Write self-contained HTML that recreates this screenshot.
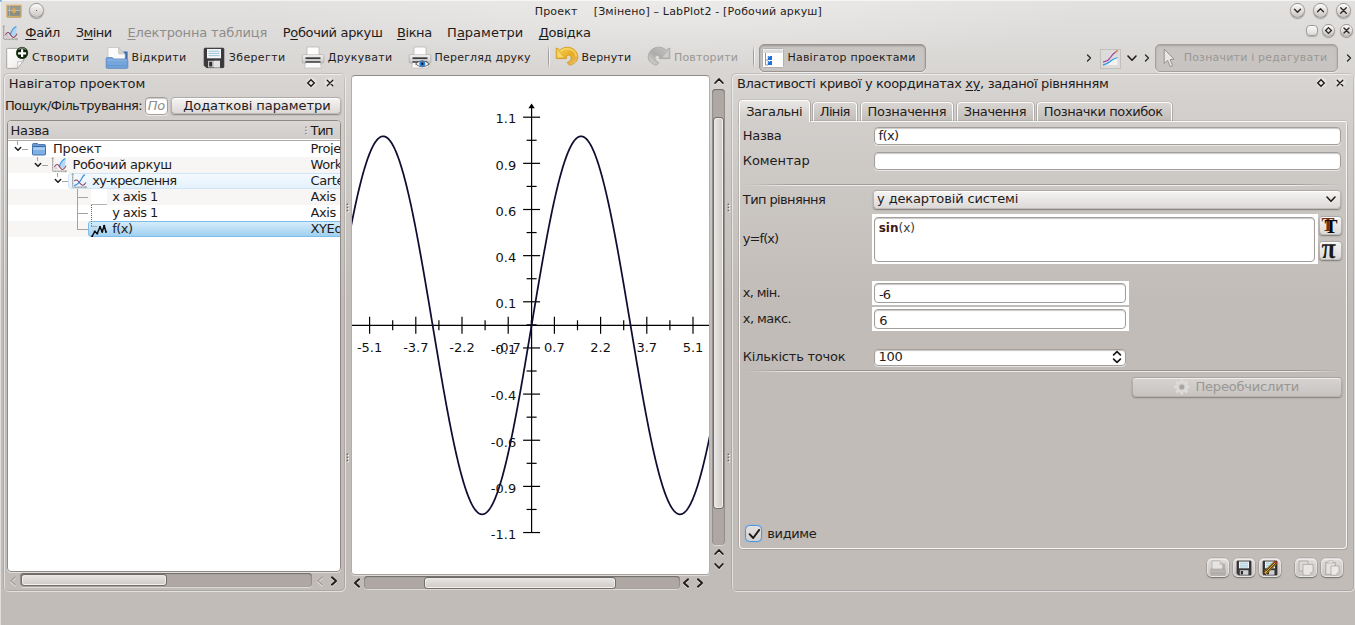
<!DOCTYPE html>
<html lang="uk"><head><meta charset="utf-8"><title>LabPlot2</title>
<style>
html,body{margin:0;padding:0}
body{width:1355px;height:625px;overflow:hidden;position:relative;font-family:"DejaVu Sans","Liberation Sans",sans-serif;background:#c1bcb8}
.t{position:absolute;white-space:pre;line-height:1;}
u{text-decoration:underline;text-underline-offset:1.5px;text-decoration-thickness:1px}

.bg{position:absolute;left:0;top:0;width:1355px;height:625px;background:
 radial-gradient(ellipse 420px 70px at 677px 0px, rgba(255,255,255,0.35), rgba(255,255,255,0) 100%),
 linear-gradient(#e2e1df 0px,#dddbd9 40px,#d2cfcc 110px,#c1bcb8 300px,#c1bcb8 100%);}
.dockd{position:absolute;border:1px solid rgba(0,0,0,0.10);border-radius:5px;box-sizing:border-box}
.dockl{position:absolute;border:1px solid rgba(255,255,255,0.55);border-radius:5px;box-sizing:border-box}
.btn{position:absolute;box-sizing:border-box;border-radius:4px;border:1px solid rgba(70,60,55,0.30);background:linear-gradient(#f6f5f4,#dcd9d7);box-shadow:0 1px 1.5px rgba(0,0,0,0.38), inset 0 1px 0 rgba(255,255,255,0.9)}
.edit{position:absolute;box-sizing:border-box;border-radius:4px;border:1px solid #a39e9a;background:#fff;box-shadow:inset 0 1px 1px rgba(0,0,0,0.22),0 1px 0 rgba(255,255,255,0.55)}
.cbtn{position:absolute;width:15px;height:15px;border-radius:50%;box-sizing:border-box;border:1px solid rgba(90,82,76,0.45);background:linear-gradient(#fafaf9,#c9c5c2);box-shadow:0 1px 1px rgba(0,0,0,0.3),inset 0 1px 0 #fff}
.sbg{position:absolute;box-sizing:border-box;border-radius:4px;background:#aea7a3;box-shadow:inset 0 1px 1px rgba(0,0,0,0.35),inset 1px 0 1px rgba(0,0,0,0.12),inset -1px 0 1px rgba(0,0,0,0.12),0 1px 0 rgba(255,255,255,0.45)}
.sbh{position:absolute;box-sizing:border-box;border-radius:3px;border:1px solid rgba(255,255,255,0.55);background:linear-gradient(#e6e4e2,#d0ccc9);box-shadow:0 0 0 1px rgba(70,62,56,0.55)}
.sbv{position:absolute;box-sizing:border-box;border-radius:3px;border:1px solid rgba(255,255,255,0.55);background:linear-gradient(90deg,#e6e4e2,#d0ccc9);box-shadow:0 0 0 1px rgba(70,62,56,0.55)}

</style></head><body>
<div class="bg"></div><svg style="position:absolute;left:6px;top:4px;" width="16" height="14" viewBox="0 0 16 14"><rect x="0.9" y="1.3" width="14.2" height="11.2" fill="#878d87" stroke="#d8b470" stroke-width="1.35"/><rect x="2" y="2.4" width="12" height="4" fill="#9da19b" opacity="0.7"/><path d="M2 6.6 H14" stroke="#e6e2da" stroke-width="0.7" opacity="0.8"/><path d="M3.6 2 V13.5" stroke="#e6e2da" stroke-width="0.6" opacity="0.7"/><path d="M8 3.2 L10.4 6.2 H5.6Z M8 10 L10.4 7 H5.6Z" fill="#e2a646"/><path d="M1 13.2 H15" stroke="#b08a4a" stroke-width="0.8"/></svg><div style="position:absolute;left:0px;top:0px;width:1px;height:625px;background:rgba(255,255,255,0.5)"></div><div style="position:absolute;left:0px;top:0px;width:1355px;height:1px;background:rgba(255,255,255,0.6)"></div><div style="position:absolute;left:0px;top:0px;width:2px;height:2px;background:#5aa0dc;border-radius:0 0 2px 0;opacity:0.8"></div><div class="cbtn" style="left:29px;top:3px"></div><div style="position:absolute;left:35.6px;top:9.6px;width:1.6px;height:1.6px;background:#333;border-radius:50%"></div><div class="t" id="t1" style="left:534.70px;top:6.00px;font-size:11px;color:#1f1c1b;letter-spacing:0.198px;">Проект</div><div class="t" id="t2" style="left:593.70px;top:6.00px;font-size:11px;color:#1f1c1b;letter-spacing:0.151px;">[Змінено] – LabPlot2 - [Робочий аркуш]</div><div class="cbtn" style="left:1290.1px;top:2.5px"></div><svg style="position:absolute;left:1290.1px;top:2.5px;" width="15" height="15" viewBox="0 0 15 15"><path d="M-3 -1.2 L0 1.8 L3 -1.2" transform="translate(7.5,7.5)" fill="none" stroke="#2a2725" stroke-width="1.35" stroke-linecap="round" stroke-linejoin="round"/></svg><div class="cbtn" style="left:1313.0px;top:2.5px"></div><svg style="position:absolute;left:1313.0px;top:2.5px;" width="15" height="15" viewBox="0 0 15 15"><path d="M-3 1.2 L0 -1.8 L3 1.2" transform="translate(7.5,7.5)" fill="none" stroke="#2a2725" stroke-width="1.35" stroke-linecap="round" stroke-linejoin="round"/></svg><div class="cbtn" style="left:1335.7px;top:2.5px"></div><svg style="position:absolute;left:1335.7px;top:2.5px;" width="15" height="15" viewBox="0 0 15 15"><path d="M-2.8 -2.8 L2.8 2.8 M2.8 -2.8 L-2.8 2.8" transform="translate(7.5,7.5)" fill="none" stroke="#2a2725" stroke-width="1.35" stroke-linecap="round" stroke-linejoin="round"/></svg><div class="t" id="t3" style="left:25.30px;top:26.00px;font-size:13px;color:#1f1c1b;letter-spacing:-0.279px;"><u>Ф</u>айл</div><div class="t" id="t4" style="left:75.70px;top:26.00px;font-size:13px;color:#1f1c1b;letter-spacing:-0.531px;">З<u>м</u>іни</div><div class="t" id="t5" style="left:127.50px;top:26.00px;font-size:13px;color:#8f8c8a;letter-spacing:-0.150px;"><u>Е</u>лектронна таблиця</div><div class="t" id="t6" style="left:282.80px;top:26.00px;font-size:13px;color:#1f1c1b;letter-spacing:-0.346px;">Р<u>о</u>бочий аркуш</div><div class="t" id="t7" style="left:396.90px;top:26.00px;font-size:13px;color:#1f1c1b;letter-spacing:-0.390px;"><u>В</u>ікна</div><div class="t" id="t8" style="left:447.10px;top:26.00px;font-size:13px;color:#1f1c1b;letter-spacing:0.005px;">П<u>а</u>раметри</div><div class="t" id="t9" style="left:538.70px;top:26.00px;font-size:13px;color:#1f1c1b;letter-spacing:-0.300px;"><u>Д</u>овідка</div><svg style="position:absolute;left:2px;top:25px;" width="16" height="16" viewBox="0 0 16 16"><path d="M1.7 0.7 V14.2 H15.4" fill="none" stroke="#a09d9a" stroke-width="0.9"/><path d="M0.6 2.2 L1.7 0.4 L2.8 2.2 M14 13.1 L15.8 14.2 L14 15.3" fill="none" stroke="#a09d9a" stroke-width="0.7"/><path d="M1 4.5 H2.4 M1 7.5 H2.4 M1 10.5 H2.4 M4.5 13.5 V15 M7.5 13.5 V15 M10.5 13.5 V15 M13 13.5 V15" stroke="#a09d9a" stroke-width="0.7"/><path d="M8.6 9 C9.5 5 12 2.3 14.4 1.5 C14.8 5 14.3 8 13.1 10.4 C11.5 11.4 9.8 11 8.6 9Z" fill="#a9d3f4" fill-opacity="0.85"/><path d="M8.2 10.2 C9.3 5.5 11.8 2.5 14.4 1.5" fill="none" stroke="#3d9ae6" stroke-width="1.1"/><path d="M3.2 12.3 C3.5 11 4.3 9.8 5.4 9.3 C6.2 11.5 7 12.5 8 12.6Z" fill="#c9b6c4" fill-opacity="0.7"/><path d="M3.3 10 Q6 5.6 8.2 9.2 T 11.6 12.4 Q13.3 12.3 15 8.6" fill="none" stroke="#8a3f62" stroke-width="1.05"/></svg><div style="position:absolute;left:1305.5px;top:25.2px;width:12.4px;height:10.4px;border-radius:4px;border:1px solid #a09b97;background:linear-gradient(#fbfbfa,#dcd9d6);box-shadow:0 1px 1px rgba(0,0,0,0.2);box-sizing:border-box"></div><div class="cbtn" style="left:1321.5px;top:24px;width:13px;height:13px"></div><svg style="position:absolute;left:1321.5px;top:24px;" width="13" height="13" viewBox="0 0 13 13"><path d="M6.5 3.6 L9.4 6.5 L6.5 9.4 L3.6 6.5Z" fill="none" stroke="#2a2725" stroke-width="1.3"/></svg><div class="cbtn" style="left:1339.5px;top:24px;width:13px;height:13px"></div><svg style="position:absolute;left:1339.5px;top:24px;" width="13" height="13" viewBox="0 0 13 13"><path d="M4 4 L9 9 M9 4 L4 9" fill="none" stroke="#2a2725" stroke-width="1.4" stroke-linecap="round"/></svg><div class="t" id="t10" style="left:32.00px;top:52.00px;font-size:11px;color:#1f1c1b;letter-spacing:0.314px;">Створити</div><div class="t" id="t11" style="left:131.60px;top:52.00px;font-size:11px;color:#1f1c1b;letter-spacing:0.279px;">Відкрити</div><div class="t" id="t12" style="left:228.80px;top:52.00px;font-size:11px;color:#1f1c1b;letter-spacing:0.372px;">Зберегти</div><div class="t" id="t13" style="left:327.80px;top:52.00px;font-size:11px;color:#1f1c1b;letter-spacing:0.297px;">Друкувати</div><div class="t" id="t14" style="left:434.60px;top:52.00px;font-size:11px;color:#1f1c1b;letter-spacing:0.186px;">Перегляд друку</div><div class="t" id="t15" style="left:581.60px;top:52.00px;font-size:11px;color:#1f1c1b;letter-spacing:0.156px;">Вернути</div><div class="t" id="t16" style="left:673.90px;top:52.00px;font-size:11px;color:#9a9794;letter-spacing:0.222px;">Повторити</div><div style="position:absolute;left:548.2px;top:45px;width:1px;height:24px;background:linear-gradient(rgba(0,0,0,0),rgba(0,0,0,0.28) 30%,rgba(0,0,0,0.28) 70%,rgba(0,0,0,0))"></div><div style="position:absolute;left:549.2px;top:45px;width:1px;height:24px;background:linear-gradient(rgba(255,255,255,0),rgba(255,255,255,0.7) 30%,rgba(255,255,255,0.7) 70%,rgba(255,255,255,0))"></div><div style="position:absolute;left:753.4px;top:45px;width:1px;height:24px;background:linear-gradient(rgba(0,0,0,0),rgba(0,0,0,0.28) 30%,rgba(0,0,0,0.28) 70%,rgba(0,0,0,0))"></div><div style="position:absolute;left:754.4px;top:45px;width:1px;height:24px;background:linear-gradient(rgba(255,255,255,0),rgba(255,255,255,0.7) 30%,rgba(255,255,255,0.7) 70%,rgba(255,255,255,0))"></div><div style="position:absolute;left:759px;top:44px;width:167px;height:27.5px;box-sizing:border-box;border-radius:5px;border:1px solid #9a9591;background:#c9c5c2;box-shadow:inset 0 1px 2px rgba(0,0,0,0.25),0 1px 0 rgba(255,255,255,0.6)"></div><div class="t" id="t17" style="left:787.40px;top:52.00px;font-size:11px;color:#1f1c1b;letter-spacing:0.239px;">Навігатор проектами</div><svg style="position:absolute;left:1083.9px;top:51.9px;" width="10" height="12" viewBox="0 0 10 12"><path d="M3.5 3 L6.5 6 L3.5 9" fill="none" stroke="#2a2725" stroke-width="1.3" stroke-linecap="round" stroke-linejoin="round"/></svg><svg style="position:absolute;left:1141.9px;top:51.9px;" width="10" height="12" viewBox="0 0 10 12"><path d="M3.5 3 L6.5 6 L3.5 9" fill="none" stroke="#2a2725" stroke-width="1.3" stroke-linecap="round" stroke-linejoin="round"/></svg><svg style="position:absolute;left:1344px;top:51.9px;" width="10" height="12" viewBox="0 0 10 12"><path d="M3.5 3 L6.5 6 L3.5 9" fill="none" stroke="#2a2725" stroke-width="1.3" stroke-linecap="round" stroke-linejoin="round"/></svg><svg style="position:absolute;left:1125px;top:52px;" width="14" height="12" viewBox="0 0 14 12"><path d="M3 4 L7 8.2 L11 4" fill="none" stroke="#1f1c1b" stroke-width="1.6" stroke-linecap="round" stroke-linejoin="round"/></svg><div style="position:absolute;left:1155px;top:43.5px;width:183px;height:28px;box-sizing:border-box;border-radius:5px;border:1px solid #a5a09c;background:#c8c4c1;box-shadow:inset 0 1px 2px rgba(0,0,0,0.18),0 1px 0 rgba(255,255,255,0.6)"></div><div class="t" id="t18" style="left:1183.70px;top:52.00px;font-size:11px;color:#9a9794;letter-spacing:0.200px;">Позначити і редагувати</div><svg style="position:absolute;left:5px;top:46px;" width="26" height="24" viewBox="0 0 26 24"><defs><linearGradient id="pg" x1="0" y1="0" x2="1" y2="1"><stop offset="0" stop-color="#ffffff"/><stop offset="0.6" stop-color="#f4f3f2"/><stop offset="1" stop-color="#dddad8"/></linearGradient></defs><path d="M1.7 3 Q1.7 2.4 2.3 2.4 H18.9 V14 L12.4 22.4 H2.3 Q1.7 22.4 1.7 21.8Z" fill="url(#pg)" stroke="#9f9b98" stroke-width="0.9"/><path d="M18.9 14 C16.5 15.8 14.5 16 12.6 15.6 C13 18 12.9 20 12.4 22.4Z" fill="#fbfbfb" stroke="#aaa6a3" stroke-width="0.6"/><circle cx="17.1" cy="6.9" r="6" fill="#0e2009"/><circle cx="17.1" cy="6.9" r="5.6" fill="none" stroke="#2b4a20" stroke-width="0.7"/><path d="M13.6 3.6 A4.8 4.8 0 0 1 20.6 3.6" fill="none" stroke="#9fb3a0" stroke-width="1.1" opacity="0.7"/><path d="M17.1 3.2 V11 M13.1 7.3 H21.1" stroke="#fff" stroke-width="2.2"/></svg><svg style="position:absolute;left:105px;top:46px;" width="24" height="24" viewBox="0 0 24 24"><path d="M17.5 5.5 H22.6 V13 H17.5Z" fill="#3b6fb5"/><path d="M3 1.5 H13.5 L20 8 V14 H3Z" fill="#fbfbfb" stroke="#c2bfbc" stroke-width="0.7"/><path d="M13.5 1.5 L20 8 H14.5 Q13.5 8 13.5 7Z" fill="#d6d3d0" stroke="#b5b1ae" stroke-width="0.5"/><path d="M1.2 12.6 Q1.2 11.6 2.2 11.6 H7 L9 13 H21.8 Q22.8 13 22.8 14 V21.4 Q22.8 22.3 21.8 22.3 H2.2 Q1.2 22.3 1.2 21.4Z" fill="#76a5dc" stroke="#4c7fc0" stroke-width="0.8"/><path d="M2 19.6 H22" stroke="#5b8fcf" stroke-width="0.8"/><path d="M2 14 H22" stroke="#a4c6ec" stroke-width="0.8" opacity="0.8"/></svg><svg style="position:absolute;left:203px;top:47px;" width="22" height="22" viewBox="0 0 22 22"><path d="M1.2 2 Q1.2 1.2 2 1.2 H20 Q20.8 1.2 20.8 2 V19.8 Q20.8 20.6 20 20.6 H3.4 L1.2 18.4Z" fill="#3b3b3e" stroke="#252527" stroke-width="0.8"/><rect x="4" y="2" width="14" height="9.3" fill="#f4f6f8"/><path d="M5.5 4.2 H16.5 M5.5 6.4 H16.5 M5.5 8.6 H16.5" stroke="#8fc0d6" stroke-width="0.9"/><rect x="5" y="13.8" width="12" height="6.6" fill="#c9c9c9"/><rect x="6.2" y="14.8" width="3" height="4.6" fill="#2e2e30"/><path d="M11 13.8 H17 V20.4 H11Z" fill="#e2e2e2"/></svg><svg style="position:absolute;left:301px;top:46px;" width="24" height="24" viewBox="0 0 24 24"><defs><linearGradient id="prb" x1="0" y1="0" x2="0" y2="1"><stop offset="0" stop-color="#f4f4f4"/><stop offset="1" stop-color="#c6c6c6"/></linearGradient></defs><path d="M6 1 H18 V10 H6Z" fill="#fdfdfd" stroke="#b9b6b3" stroke-width="0.8"/><path d="M1.2 9.8 Q1.2 8.6 2.4 8.6 H21.6 Q22.8 8.6 22.8 9.8 V16 Q22.8 17 21.8 17 H2.2 Q1.2 17 1.2 16Z" fill="url(#prb)" stroke="#a9a6a3" stroke-width="0.7"/><path d="M6 8.6 H18 V10 H6Z" fill="#e9e9e9"/><path d="M4.5 12.2 H19.5" stroke="#3c3c3c" stroke-width="1.8"/><path d="M4.8 15.6 H19.2 L20.4 22 H3.6Z" fill="#fafafa" stroke="#b9b6b3" stroke-width="0.7"/><path d="M4.5 16 H19.5" stroke="#2e2e2e" stroke-width="1.4"/></svg><svg style="position:absolute;left:408px;top:46px;" width="24" height="24" viewBox="0 0 24 24"><defs><linearGradient id="prb" x1="0" y1="0" x2="0" y2="1"><stop offset="0" stop-color="#f4f4f4"/><stop offset="1" stop-color="#c6c6c6"/></linearGradient></defs><path d="M6 1 H18 V10 H6Z" fill="#fdfdfd" stroke="#b9b6b3" stroke-width="0.8"/><path d="M1.2 9.8 Q1.2 8.6 2.4 8.6 H21.6 Q22.8 8.6 22.8 9.8 V16 Q22.8 17 21.8 17 H2.2 Q1.2 17 1.2 16Z" fill="url(#prb)" stroke="#a9a6a3" stroke-width="0.7"/><path d="M6 8.6 H18 V10 H6Z" fill="#e9e9e9"/><path d="M4.5 12.2 H19.5" stroke="#3c3c3c" stroke-width="1.8"/><path d="M4.8 15.6 H19.2 L20.4 22 H3.6Z" fill="#fafafa" stroke="#b9b6b3" stroke-width="0.7"/><path d="M4.5 16 H19.5" stroke="#2e2e2e" stroke-width="1.4"/><path d="M7.5 18 Q14 11.5 21.5 18 Q14 23.5 7.5 18Z" fill="#f2f2f2" stroke="#555" stroke-width="0.9"/><circle cx="14.3" cy="17.8" r="3" fill="#2f7fd6"/><circle cx="14.3" cy="17.8" r="1.2" fill="#10213a"/></svg><svg style="position:absolute;left:555px;top:46px;" width="24" height="22" viewBox="0 0 24 22"><defs><linearGradient id="ug" x1="0" y1="0" x2="0.9" y2="1"><stop offset="0" stop-color="#f6d257"/><stop offset="0.55" stop-color="#e5ae27"/><stop offset="0.8" stop-color="#e3b040"/><stop offset="1" stop-color="#f2e4c4"/></linearGradient></defs><path d="M1.2 2 L1.2 12.6 L11.4 12.6 L11.4 10.6 C13 8.6 15.6 9 16.1 11.4 C16.4 13.6 15 15.4 12.2 16.6 L14.5 19.2 C19.5 18.2 22.6 15 22.8 11.5 C23 6 18.2 1.2 12.4 1.2 C9 1.2 6.6 2.4 4.8 4.2 L3.2 2.8 Z" fill="url(#ug)" stroke="#d49a1c" stroke-width="0.9" stroke-linejoin="round"/><path d="M2.6 5 L2.6 11.3 L8.8 11.3 C6.5 9.5 4.5 7.2 2.6 5Z" fill="#f9dc74" opacity="0.9"/><path d="M6 4.6 C9 2.6 13 2.2 16.5 3.8 C19 5 20.8 7.5 21.2 10" fill="none" stroke="#f9dc74" stroke-width="1.6" opacity="0.75" stroke-linecap="round"/></svg><svg style="position:absolute;left:647px;top:46px;" width="24" height="22" viewBox="0 0 24 22"><defs><linearGradient id="rg" x1="0" y1="0" x2="0.9" y2="1"><stop offset="0" stop-color="#c9c7c5"/><stop offset="0.55" stop-color="#aeacaa"/><stop offset="1" stop-color="#d6d4d2"/></linearGradient></defs><g transform="translate(24,0) scale(-1,1)"><path d="M1.2 2 L1.2 12.6 L11.4 12.6 L11.4 10.6 C13 8.6 15.6 9 16.1 11.4 C16.4 13.6 15 15.4 12.2 16.6 L14.5 19.2 C19.5 18.2 22.6 15 22.8 11.5 C23 6 18.2 1.2 12.4 1.2 C9 1.2 6.6 2.4 4.8 4.2 L3.2 2.8 Z" fill="url(#rg)" stroke="#a5a3a1" stroke-width="0.8" stroke-linejoin="round"/><path d="M2.6 5 L2.6 11.3 L8.8 11.3 C6.5 9.5 4.5 7.2 2.6 5Z" fill="#d4d2d0" opacity="0.9"/></g></svg><svg style="position:absolute;left:762px;top:48px;" width="22" height="20" viewBox="0 0 22 20"><rect x="0.5" y="0.5" width="21" height="19" rx="1" fill="#fff" stroke="#b5b1ae"/><rect x="1.5" y="1.5" width="19" height="3.5" fill="#dcdcdc"/><path d="M3.5 5 V17 H6 M3.5 12 H6" fill="none" stroke="#8a8a8a" stroke-width="0.9"/><rect x="5.8" y="8" width="4.2" height="4" fill="#1f6fd8"/><rect x="5.8" y="13" width="4.2" height="4" fill="#1f6fd8"/><path d="M6.5 9 L8 8.3 M6.5 14 L8 13.3" stroke="#bfe0ff" stroke-width="0.8"/></svg><svg style="position:absolute;left:1100px;top:48.5px;" width="21" height="20" viewBox="0 0 21 20"><rect x="0.5" y="0.5" width="20" height="19" fill="#dedcda" stroke="#9c9996" stroke-width="0.8" stroke-dasharray="1 1"/><path d="M3 16 C6 15 8 14.5 10 12 S14 8.5 17.5 7.5 V16Z" fill="#f4f4f4" opacity="0.9"/><path d="M3 13 C6 12.5 8 12.5 10 9 S14 4 17.5 1.5" fill="none" stroke="#9a3f96" stroke-width="1.1"/><path d="M15 3.6 L17.5 1.5" stroke="#e08a2a" stroke-width="1.1"/><path d="M3 16 C6 15.5 8 14.5 10 12.5 S14 9.5 17.5 8.5" fill="none" stroke="#2f9ae8" stroke-width="1.3"/></svg><svg style="position:absolute;left:1162px;top:47px;" width="14" height="22" viewBox="0 0 14 22"><path d="M2.2 2 L2.2 16.5 L5.6 13.4 L8.2 19.6 L10.6 18.6 L8 12.6 L12 12.2Z" fill="#e9e7e5" stroke="#8e8b88" stroke-width="0.9" stroke-linejoin="round"/></svg><div class="dockl" style="left:4px;top:74px;width:342px;height:517.5px"></div><div class="dockd" style="left:3px;top:73px;width:342px;height:517.5px"></div><div class="t" id="t19" style="left:8.80px;top:77.00px;font-size:13px;color:#1f1c1b;letter-spacing:-0.072px;">Навігатор проектом</div><div style="position:absolute;left:305.6px;top:77.0px;width:11px;height:11px;border-radius:50%;background:radial-gradient(rgba(255,255,255,0.55),rgba(255,255,255,0.25) 60%,rgba(255,255,255,0))"></div><div style="position:absolute;left:324.4px;top:77.0px;width:11px;height:11px;border-radius:50%;background:radial-gradient(rgba(255,255,255,0.55),rgba(255,255,255,0.25) 60%,rgba(255,255,255,0))"></div><svg style="position:absolute;left:306.1px;top:77.5px;" width="10" height="10" viewBox="0 0 10 10"><path d="M5 1.7 L8.3 5 L5 8.3 L1.7 5Z" fill="none" stroke="#1d1a19" stroke-width="1.35"/></svg><svg style="position:absolute;left:324.9px;top:77.5px;" width="10" height="10" viewBox="0 0 10 10"><path d="M2.2 2.2 L7.8 7.8 M7.8 2.2 L2.2 7.8" fill="none" stroke="#1d1a19" stroke-width="1.3" stroke-linecap="round"/></svg><div class="t" id="t20" style="left:4.90px;top:99.00px;font-size:13px;color:#1f1c1b;letter-spacing:-0.604px;">Пошук/Фільтрування:</div><div class="edit" style="left:145px;top:97px;width:23px;height:17.8px"></div><div class="t" id="t21" style="left:147.80px;top:99.00px;font-size:13px;color:#8f8c89;letter-spacing:-0.232px;font-style:italic;">По</div><div class="btn" style="left:171.3px;top:96.5px;width:169.8px;height:17.6px"></div><div class="t" id="t22" style="left:183.20px;top:99.00px;font-size:13px;color:#1f1c1b;letter-spacing:-0.068px;">Додаткові параметри</div><div style="position:absolute;left:7px;top:120px;width:334px;height:452px;box-sizing:border-box;border:1px solid #8f8a86;border-radius:4px;background:#fff;overflow:hidden;box-shadow:0 1px 0 rgba(255,255,255,0.5)"><div style="position:absolute;left:0;top:0;width:332px;height:18px;background:linear-gradient(#dad7d5,#cfccc9);border-bottom:1px solid #fff"></div><div style="position:absolute;left:0;top:19px;width:332px;height:1px;background:#b0a9a5"></div><div style="position:absolute;left:0;top:36px;width:332px;height:16px;background:#f7f6f5"></div><div style="position:absolute;left:0;top:68px;width:332px;height:16px;background:#f7f6f5"></div><div style="position:absolute;left:0;top:100px;width:332px;height:16px;background:#f7f6f5"></div><div style="position:absolute;left:60px;top:52px;width:280px;height:16px;box-sizing:border-box;border:1px solid #cfe6f8;border-radius:3px;background:linear-gradient(#f4fafe,#e4f1fb)"></div><div style="position:absolute;left:80px;top:100px;width:260px;height:16px;box-sizing:border-box;border:1px solid #7fbde6;border-radius:3px;background:linear-gradient(#d6ecfa,#9fd0f0)"></div></div><div class="t" id="t23" style="left:10.60px;top:124.00px;font-size:13px;color:#1f1c1b;letter-spacing:-0.324px;">Назва</div><div class="t" id="t24" style="left:310.50px;top:124.00px;font-size:13px;color:#1f1c1b;letter-spacing:-0.896px;">Тип</div><svg style="position:absolute;left:305.4px;top:126px;" width="3" height="10" viewBox="0 0 3 10"><rect x="1.3" y="1.5" width="1.1" height="1.1" fill="#fff" opacity="0.85"/><rect x="0.4" y="0.6" width="1.2" height="1.2" fill="#6f6b68"/><rect x="1.3" y="4.7" width="1.1" height="1.1" fill="#fff" opacity="0.85"/><rect x="0.4" y="3.8" width="1.2" height="1.2" fill="#6f6b68"/><rect x="1.3" y="7.9" width="1.1" height="1.1" fill="#fff" opacity="0.85"/><rect x="0.4" y="7.0" width="1.2" height="1.2" fill="#6f6b68"/></svg><div class="t" id="t25" style="left:53.00px;top:142.00px;font-size:13px;color:#1f1c1b;letter-spacing:-0.181px;">Проект</div><div class="t" id="t26" style="left:310.60px;top:142.00px;font-size:13px;color:#1f1c1b;letter-spacing:-0.420px;width:29.3px;overflow:hidden;">Proje</div><div class="t" id="t27" style="left:72.60px;top:158.00px;font-size:13px;color:#1f1c1b;letter-spacing:-0.387px;">Робочий аркуш</div><div class="t" id="t28" style="left:310.60px;top:158.00px;font-size:13px;color:#1f1c1b;letter-spacing:-0.420px;width:29.3px;overflow:hidden;">Work</div><div class="t" id="t29" style="left:92.20px;top:174.00px;font-size:13px;color:#1f1c1b;letter-spacing:-0.658px;">xy-креслення</div><div class="t" id="t30" style="left:310.60px;top:174.00px;font-size:13px;color:#1f1c1b;letter-spacing:-0.420px;width:29.3px;overflow:hidden;">Carte</div><div class="t" id="t31" style="left:112.20px;top:190.00px;font-size:13px;color:#1f1c1b;letter-spacing:-0.612px;">x axis 1</div><div class="t" id="t32" style="left:310.60px;top:190.00px;font-size:13px;color:#1f1c1b;letter-spacing:-0.420px;width:29.3px;overflow:hidden;">Axis</div><div class="t" id="t33" style="left:112.20px;top:206.00px;font-size:13px;color:#1f1c1b;letter-spacing:-0.612px;">y axis 1</div><div class="t" id="t34" style="left:310.60px;top:206.00px;font-size:13px;color:#1f1c1b;letter-spacing:-0.420px;width:29.3px;overflow:hidden;">Axis</div><div class="t" id="t35" style="left:112.20px;top:222.00px;font-size:13px;color:#1f1c1b;letter-spacing:-0.509px;">f(x)</div><div class="t" id="t36" style="left:310.60px;top:222.00px;font-size:13px;color:#1f1c1b;letter-spacing:-0.420px;width:29.3px;overflow:hidden;">XYEq</div><svg style="position:absolute;left:13.5px;top:146px;" width="8" height="6" viewBox="0 0 8 6"><path d="M1.3 1.4 L4 4.2 L6.7 1.4" fill="none" stroke="#1d1a19" stroke-width="1.45" stroke-linecap="round" stroke-linejoin="round"/></svg><svg style="position:absolute;left:33.5px;top:162px;" width="8" height="6" viewBox="0 0 8 6"><path d="M1.3 1.4 L4 4.2 L6.7 1.4" fill="none" stroke="#1d1a19" stroke-width="1.45" stroke-linecap="round" stroke-linejoin="round"/></svg><svg style="position:absolute;left:53.5px;top:178px;" width="8" height="6" viewBox="0 0 8 6"><path d="M1.3 1.4 L4 4.2 L6.7 1.4" fill="none" stroke="#1d1a19" stroke-width="1.45" stroke-linecap="round" stroke-linejoin="round"/></svg><div style="position:absolute;left:22px;top:149px;width:6px;height:1px;background:#a8a19c"></div><div style="position:absolute;left:42px;top:165px;width:6px;height:1px;background:#a8a19c"></div><div style="position:absolute;left:62px;top:181px;width:6px;height:1px;background:#a8a19c"></div><div style="position:absolute;left:17px;top:141px;width:1px;height:4px;background:#a8a19c"></div><div style="position:absolute;left:37px;top:157px;width:1px;height:4px;background:#a8a19c"></div><div style="position:absolute;left:57px;top:173px;width:1px;height:4px;background:#a8a19c"></div><div style="position:absolute;left:77px;top:189px;width:1px;height:40px;background:#a8a19c"></div><div style="position:absolute;left:77px;top:197px;width:11px;height:1px;background:#a8a19c"></div><div style="position:absolute;left:77px;top:213px;width:11px;height:1px;background:#a8a19c"></div><div style="position:absolute;left:77px;top:229px;width:11px;height:1px;background:#a8a19c"></div><svg style="position:absolute;left:31px;top:141px;" width="16" height="16" viewBox="0 0 16 16"><path d="M1.5 3.5 Q1.5 2.5 2.5 2.5 H6.5 L7.5 3.5 H13.5 Q14.5 3.5 14.5 4.5 V6 H1.5Z" fill="#6a9ad0" stroke="#3465a4" stroke-width="0.8"/><rect x="1.5" y="5.5" width="13" height="8.5" rx="1" fill="#7fb0e4" stroke="#3465a4" stroke-width="0.9"/><rect x="2.3" y="6.4" width="11.4" height="2.5" fill="#b6d4f2" opacity="0.8"/></svg><svg style="position:absolute;left:51px;top:157px;" width="16" height="16" viewBox="0 0 16 16"><path d="M1.7 0.7 V14.2 H15.4" fill="none" stroke="#a09d9a" stroke-width="0.9"/><path d="M0.6 2.2 L1.7 0.4 L2.8 2.2 M14 13.1 L15.8 14.2 L14 15.3" fill="none" stroke="#a09d9a" stroke-width="0.7"/><path d="M1 4.5 H2.4 M1 7.5 H2.4 M1 10.5 H2.4 M4.5 13.5 V15 M7.5 13.5 V15 M10.5 13.5 V15 M13 13.5 V15" stroke="#a09d9a" stroke-width="0.7"/><path d="M8.6 9 C9.5 5 12 2.3 14.4 1.5 C14.8 5 14.3 8 13.1 10.4 C11.5 11.4 9.8 11 8.6 9Z" fill="#a9d3f4" fill-opacity="0.85"/><path d="M8.2 10.2 C9.3 5.5 11.8 2.5 14.4 1.5" fill="none" stroke="#3d9ae6" stroke-width="1.1"/><path d="M3.2 12.3 C3.5 11 4.3 9.8 5.4 9.3 C6.2 11.5 7 12.5 8 12.6Z" fill="#c9b6c4" fill-opacity="0.7"/><path d="M3.3 10 Q6 5.6 8.2 9.2 T 11.6 12.4 Q13.3 12.3 15 8.6" fill="none" stroke="#8a3f62" stroke-width="1.05"/></svg><svg style="position:absolute;left:71px;top:173px;" width="16" height="16" viewBox="0 0 16 16"><path d="M1.7 0.7 V14.2 H15.4" fill="none" stroke="#a09d9a" stroke-width="0.9"/><path d="M0.6 2.2 L1.7 0.4 L2.8 2.2 M14 13.1 L15.8 14.2 L14 15.3" fill="none" stroke="#a09d9a" stroke-width="0.7"/><path d="M1 4.5 H2.4 M1 7.5 H2.4 M1 10.5 H2.4 M4.5 13.5 V15 M7.5 13.5 V15 M10.5 13.5 V15 M13 13.5 V15" stroke="#a09d9a" stroke-width="0.7"/><path d="M3 12.6 C6 12 9.5 8 11 5 S13 2.2 14 1.8" fill="none" stroke="#3d8fe0" stroke-width="1.2"/><path d="M3.2 8 Q5.5 5.5 8 9 T 12 12.2 Q13.5 12 14.8 9.5" fill="none" stroke="#8a3f62" stroke-width="1.05"/></svg><div style="position:absolute;left:91px;top:189px;width:16px;height:16px;background:#fff"></div><div style="position:absolute;left:91px;top:205px;width:16px;height:16px;background:#fff"></div><svg style="position:absolute;left:91px;top:189px;" width="16" height="16" viewBox="0 0 16 16"><path d="M0.5 15.5 H15.5" stroke="#666" stroke-width="1" stroke-dasharray="1 1"/></svg><svg style="position:absolute;left:91px;top:205px;" width="16" height="16" viewBox="0 0 16 16"><path d="M0.5 0 V15.5" stroke="#666" stroke-width="1" stroke-dasharray="1 1"/></svg><svg style="position:absolute;left:91px;top:221px;" width="16" height="16" viewBox="0 0 16 16"><path d="M1 15.5 L3.8 10.5 L6.2 12.5 L9 6 L11.2 10.8 L13.2 4.8 L15 11" fill="none" stroke="#0c0c0c" stroke-width="1.5" stroke-linejoin="round"/><g fill="#0c0c0c"><circle cx="3.8" cy="10.5" r="1.1"/><circle cx="6.2" cy="12.5" r="1.1"/><circle cx="9" cy="6" r="1.1"/><circle cx="11.2" cy="10.8" r="1.1"/><circle cx="13.2" cy="4.8" r="1.1"/><circle cx="15" cy="11" r="1"/><circle cx="1.2" cy="15.2" r="1"/></g><path d="M0.5 0 V6 M0.5 5.5 H6" stroke="#777" stroke-width="1" stroke-dasharray="1 1" fill="none"/></svg><svg style="position:absolute;left:6.6px;top:573.8px;" width="12" height="14" viewBox="0 0 12 14"><g transform="translate(6,7)"><path d="M2.1 -3.7 L-2.1 0 L2.1 3.7" transform="translate(0,1)" stroke="#fff" stroke-opacity="0.7" stroke-width="1.3" fill="none" stroke-linecap="round" stroke-linejoin="round"/><path d="M2.1 -3.7 L-2.1 0 L2.1 3.7" stroke="#a39e9a" stroke-width="1.3" fill="none" stroke-linecap="round" stroke-linejoin="round"/></g></svg><div class="sbg" style="left:20.3px;top:573.3px;width:292px;height:13.7px"></div><div class="sbh" style="left:22px;top:575px;width:143.5px;height:10.3px"></div><svg style="position:absolute;left:313.5px;top:573.8px;" width="12" height="14" viewBox="0 0 12 14"><g transform="translate(6,7)"><path d="M2.1 -3.7 L-2.1 0 L2.1 3.7" transform="translate(0,1)" stroke="#fff" stroke-opacity="0.7" stroke-width="1.3" fill="none" stroke-linecap="round" stroke-linejoin="round"/><path d="M2.1 -3.7 L-2.1 0 L2.1 3.7" stroke="#a39e9a" stroke-width="1.3" fill="none" stroke-linecap="round" stroke-linejoin="round"/></g></svg><svg style="position:absolute;left:327.6px;top:573.5px;" width="12" height="14" viewBox="0 0 12 14"><g transform="translate(6,7)"><path d="M-2.1 -3.7 L2.1 0 L-2.1 3.7" transform="translate(0,1)" stroke="#fff" stroke-opacity="0.5" stroke-width="1.8" fill="none" stroke-linecap="round" stroke-linejoin="round"/><path d="M-2.1 -3.7 L2.1 0 L-2.1 3.7" stroke="#1d1a19" stroke-width="1.8" fill="none" stroke-linecap="round" stroke-linejoin="round"/></g></svg><div style="position:absolute;left:351px;top:75px;width:359.29999999999995px;height:499.6px;box-sizing:border-box;background:#fff;border-radius:4px;border:1px solid #b3aeaa;border-top-color:#8f8a86;border-bottom-color:#a9a4a0;box-shadow:0 1px 0 rgba(255,255,255,0.45)"></div><svg style="position:absolute;left:352px;top:76px;overflow:hidden" width="357.29999999999995" height="497.6" viewBox="0 0 357.29999999999995 497.6"><g font-family='"DejaVu Sans","Liberation Sans",sans-serif' font-size="13" fill="#111"><path d="M0 249.30 H357.29999999999995" stroke="#000" stroke-width="1.2"/><path d="M179.60 29.60 V456.60" stroke="#000" stroke-width="1.2"/><path d="M179.60 27.60 l3.2 4.6 h-6.4Z" fill="#000"/><path d="M171.10 41.20 H188.10" stroke="#000" stroke-width="1.2"/><path d="M174.60 64.28 H184.60" stroke="#000" stroke-width="1.2"/><path d="M171.10 87.35 H188.10" stroke="#000" stroke-width="1.2"/><path d="M174.60 110.42 H184.60" stroke="#000" stroke-width="1.2"/><path d="M171.10 133.50 H188.10" stroke="#000" stroke-width="1.2"/><path d="M174.60 156.57 H184.60" stroke="#000" stroke-width="1.2"/><path d="M171.10 179.65 H188.10" stroke="#000" stroke-width="1.2"/><path d="M174.60 202.72 H184.60" stroke="#000" stroke-width="1.2"/><path d="M171.10 225.80 H188.10" stroke="#000" stroke-width="1.2"/><path d="M174.60 248.88 H184.60" stroke="#000" stroke-width="1.2"/><path d="M171.10 271.95 H188.10" stroke="#000" stroke-width="1.2"/><path d="M174.60 295.02 H184.60" stroke="#000" stroke-width="1.2"/><path d="M171.10 318.10 H188.10" stroke="#000" stroke-width="1.2"/><path d="M174.60 341.17 H184.60" stroke="#000" stroke-width="1.2"/><path d="M171.10 364.25 H188.10" stroke="#000" stroke-width="1.2"/><path d="M174.60 387.32 H184.60" stroke="#000" stroke-width="1.2"/><path d="M171.10 410.40 H188.10" stroke="#000" stroke-width="1.2"/><path d="M174.60 433.47 H184.60" stroke="#000" stroke-width="1.2"/><path d="M171.10 456.55 H188.10" stroke="#000" stroke-width="1.2"/><path d="M-28.60 240.80 V257.80" stroke="#000" stroke-width="1.2"/><path d="M-5.50 244.30 V254.30" stroke="#000" stroke-width="1.2"/><path d="M17.60 240.80 V257.80" stroke="#000" stroke-width="1.2"/><path d="M40.70 244.30 V254.30" stroke="#000" stroke-width="1.2"/><path d="M63.80 240.80 V257.80" stroke="#000" stroke-width="1.2"/><path d="M86.90 244.30 V254.30" stroke="#000" stroke-width="1.2"/><path d="M110.00 240.80 V257.80" stroke="#000" stroke-width="1.2"/><path d="M133.10 244.30 V254.30" stroke="#000" stroke-width="1.2"/><path d="M156.20 240.80 V257.80" stroke="#000" stroke-width="1.2"/><path d="M179.30 244.30 V254.30" stroke="#000" stroke-width="1.2"/><path d="M202.40 240.80 V257.80" stroke="#000" stroke-width="1.2"/><path d="M225.50 244.30 V254.30" stroke="#000" stroke-width="1.2"/><path d="M248.60 240.80 V257.80" stroke="#000" stroke-width="1.2"/><path d="M271.70 244.30 V254.30" stroke="#000" stroke-width="1.2"/><path d="M294.80 240.80 V257.80" stroke="#000" stroke-width="1.2"/><path d="M317.90 244.30 V254.30" stroke="#000" stroke-width="1.2"/><path d="M341.00 240.80 V257.80" stroke="#000" stroke-width="1.2"/><path d="M364.10 244.30 V254.30" stroke="#000" stroke-width="1.2"/><path d="M387.20 240.80 V257.80" stroke="#000" stroke-width="1.2"/><path d="M410.30 244.30 V254.30" stroke="#000" stroke-width="1.2"/><text x="164.20" y="47.50" text-anchor="end">1.1</text><text x="164.20" y="93.65" text-anchor="end">0.9</text><text x="164.20" y="139.80" text-anchor="end">0.6</text><text x="164.20" y="185.95" text-anchor="end">0.4</text><text x="164.20" y="232.10" text-anchor="end">0.1</text><text x="164.20" y="278.25" text-anchor="end">-0.1</text><text x="164.20" y="324.40" text-anchor="end">-0.4</text><text x="164.20" y="370.55" text-anchor="end">-0.6</text><text x="164.20" y="416.70" text-anchor="end">-0.9</text><text x="164.20" y="462.85" text-anchor="end">-1.1</text><text x="17.60" y="275.80" text-anchor="middle">-5.1</text><text x="63.80" y="275.80" text-anchor="middle">-3.7</text><text x="110.00" y="275.80" text-anchor="middle">-2.2</text><text x="156.20" y="275.80" text-anchor="middle">-0.7</text><text x="202.40" y="275.80" text-anchor="middle">0.7</text><text x="248.60" y="275.80" text-anchor="middle">2.2</text><text x="294.80" y="275.80" text-anchor="middle">3.7</text><text x="341.00" y="275.80" text-anchor="middle">5.1</text><path d="M-9.40 196.49 L-8.77 192.87 L-8.14 189.28 L-7.51 185.70 L-6.88 182.16 L-6.25 178.64 L-5.62 175.15 L-4.99 171.68 L-4.36 168.25 L-3.73 164.85 L-3.10 161.49 L-2.47 158.16 L-1.84 154.87 L-1.21 151.61 L-0.58 148.40 L0.05 145.22 L0.68 142.09 L1.31 138.99 L1.94 135.95 L2.57 132.95 L3.20 129.99 L3.83 127.08 L4.46 124.22 L5.09 121.42 L5.72 118.66 L6.35 115.95 L6.98 113.30 L7.61 110.70 L8.24 108.16 L8.87 105.68 L9.50 103.25 L10.13 100.88 L10.76 98.57 L11.39 96.32 L12.02 94.13 L12.65 92.00 L13.28 89.94 L13.91 87.94 L14.54 86.00 L15.17 84.13 L15.80 82.33 L16.43 80.59 L17.06 78.92 L17.69 77.32 L18.32 75.78 L18.95 74.32 L19.58 72.93 L20.21 71.60 L20.84 70.35 L21.47 69.17 L22.10 68.06 L22.73 67.03 L23.36 66.06 L23.99 65.17 L24.62 64.36 L25.25 63.62 L25.88 62.95 L26.51 62.36 L27.14 61.84 L27.77 61.39 L28.40 61.02 L29.03 60.73 L29.66 60.51 L30.29 60.37 L30.92 60.31 L31.55 60.31 L32.18 60.40 L32.81 60.56 L33.44 60.79 L34.07 61.11 L34.70 61.49 L35.33 61.95 L35.96 62.49 L36.59 63.10 L37.22 63.79 L37.85 64.55 L38.48 65.38 L39.11 66.29 L39.74 67.27 L40.37 68.32 L41.00 69.45 L41.63 70.64 L42.26 71.91 L42.89 73.25 L43.52 74.66 L44.15 76.14 L44.78 77.69 L45.41 79.31 L46.04 81.00 L46.67 82.75 L47.30 84.57 L47.93 86.46 L48.56 88.41 L49.19 90.42 L49.82 92.50 L50.45 94.65 L51.08 96.85 L51.71 99.11 L52.34 101.44 L52.97 103.82 L53.60 106.26 L54.23 108.76 L54.86 111.32 L55.49 113.93 L56.12 116.59 L56.75 119.31 L57.38 122.08 L58.01 124.90 L58.64 127.77 L59.27 130.69 L59.90 133.66 L60.53 136.67 L61.16 139.73 L61.79 142.83 L62.42 145.98 L63.05 149.16 L63.68 152.39 L64.31 155.65 L64.94 158.95 L65.57 162.29 L66.20 165.66 L66.83 169.07 L67.46 172.51 L68.09 175.98 L68.72 179.48 L69.35 183.00 L69.98 186.55 L70.61 190.13 L71.24 193.73 L71.87 197.36 L72.50 201.00 L73.13 204.67 L73.76 208.35 L74.39 212.05 L75.02 215.76 L75.65 219.49 L76.28 223.22 L76.91 226.97 L77.54 230.73 L78.17 234.50 L78.80 238.27 L79.43 242.04 L80.06 245.82 L80.69 249.60 L81.32 253.38 L81.95 257.16 L82.58 260.93 L83.21 264.70 L83.84 268.47 L84.47 272.22 L85.10 275.97 L85.73 279.71 L86.36 283.43 L86.99 287.14 L87.62 290.84 L88.25 294.52 L88.88 298.18 L89.51 301.82 L90.14 305.44 L90.77 309.04 L91.40 312.61 L92.03 316.16 L92.66 319.68 L93.29 323.18 L93.92 326.64 L94.55 330.07 L95.18 333.48 L95.81 336.84 L96.44 340.18 L97.07 343.47 L97.70 346.73 L98.33 349.95 L98.96 353.13 L99.59 356.27 L100.22 359.36 L100.85 362.41 L101.48 365.42 L102.11 368.38 L102.74 371.29 L103.37 374.15 L104.00 376.96 L104.63 379.72 L105.26 382.43 L105.89 385.09 L106.52 387.69 L107.15 390.24 L107.78 392.73 L108.41 395.16 L109.04 397.54 L109.67 399.85 L110.30 402.11 L110.93 404.30 L111.56 406.43 L112.19 408.50 L112.82 410.51 L113.45 412.45 L114.08 414.32 L114.71 416.13 L115.34 417.87 L115.97 419.55 L116.60 421.16 L117.23 422.70 L117.86 424.16 L118.49 425.56 L119.12 426.89 L119.75 428.15 L120.38 429.34 L121.01 430.45 L121.64 431.49 L122.27 432.46 L122.90 433.36 L123.53 434.18 L124.16 434.93 L124.79 435.60 L125.42 436.20 L126.05 436.72 L126.68 437.17 L127.31 437.55 L127.94 437.85 L128.57 438.07 L129.20 438.22 L129.83 438.29 L130.46 438.29 L131.09 438.21 L131.72 438.06 L132.35 437.83 L132.98 437.52 L133.61 437.14 L134.24 436.69 L134.87 436.16 L135.50 435.55 L136.13 434.87 L136.76 434.12 L137.39 433.29 L138.02 432.39 L138.65 431.41 L139.28 430.36 L139.91 429.25 L140.54 428.05 L141.17 426.79 L141.80 425.46 L142.43 424.05 L143.06 422.58 L143.69 421.03 L144.32 419.42 L144.95 417.74 L145.58 415.99 L146.21 414.18 L146.84 412.29 L147.47 410.35 L148.10 408.34 L148.73 406.26 L149.36 404.13 L149.99 401.93 L150.62 399.67 L151.25 397.35 L151.88 394.97 L152.51 392.53 L153.14 390.04 L153.77 387.49 L154.40 384.88 L155.03 382.22 L155.66 379.51 L156.29 376.74 L156.92 373.92 L157.55 371.06 L158.18 368.14 L158.81 365.18 L159.44 362.17 L160.07 359.12 L160.70 356.02 L161.33 352.88 L161.96 349.69 L162.59 346.47 L163.22 343.21 L163.85 339.91 L164.48 336.58 L165.11 333.21 L165.74 329.80 L166.37 326.37 L167.00 322.90 L167.63 319.40 L168.26 315.88 L168.89 312.33 L169.52 308.75 L170.15 305.15 L170.78 301.53 L171.41 297.89 L172.04 294.23 L172.67 290.55 L173.30 286.85 L173.93 283.14 L174.56 279.41 L175.19 275.67 L175.82 271.93 L176.45 268.17 L177.08 264.40 L177.71 260.63 L178.34 256.86 L178.97 253.08 L179.60 249.30 L180.23 245.52 L180.86 241.74 L181.49 237.97 L182.12 234.20 L182.75 230.43 L183.38 226.67 L184.01 222.93 L184.64 219.19 L185.27 215.46 L185.90 211.75 L186.53 208.05 L187.16 204.37 L187.79 200.71 L188.42 197.07 L189.05 193.45 L189.68 189.85 L190.31 186.27 L190.94 182.72 L191.57 179.20 L192.20 175.70 L192.83 172.23 L193.46 168.80 L194.09 165.39 L194.72 162.02 L195.35 158.69 L195.98 155.39 L196.61 152.13 L197.24 148.91 L197.87 145.72 L198.50 142.58 L199.13 139.48 L199.76 136.43 L200.39 133.42 L201.02 130.46 L201.65 127.54 L202.28 124.68 L202.91 121.86 L203.54 119.09 L204.17 116.38 L204.80 113.72 L205.43 111.11 L206.06 108.56 L206.69 106.07 L207.32 103.63 L207.95 101.25 L208.58 98.93 L209.21 96.67 L209.84 94.47 L210.47 92.34 L211.10 90.26 L211.73 88.25 L212.36 86.31 L212.99 84.42 L213.62 82.61 L214.25 80.86 L214.88 79.18 L215.51 77.57 L216.14 76.02 L216.77 74.55 L217.40 73.14 L218.03 71.81 L218.66 70.55 L219.29 69.35 L219.92 68.24 L220.55 67.19 L221.18 66.21 L221.81 65.31 L222.44 64.48 L223.07 63.73 L223.70 63.05 L224.33 62.44 L224.96 61.91 L225.59 61.46 L226.22 61.08 L226.85 60.77 L227.48 60.54 L228.11 60.39 L228.74 60.31 L229.37 60.31 L230.00 60.38 L230.63 60.53 L231.26 60.75 L231.89 61.05 L232.52 61.43 L233.15 61.88 L233.78 62.40 L234.41 63.00 L235.04 63.67 L235.67 64.42 L236.30 65.24 L236.93 66.14 L237.56 67.11 L238.19 68.15 L238.82 69.26 L239.45 70.45 L240.08 71.71 L240.71 73.04 L241.34 74.44 L241.97 75.90 L242.60 77.44 L243.23 79.05 L243.86 80.73 L244.49 82.47 L245.12 84.28 L245.75 86.15 L246.38 88.09 L247.01 90.10 L247.64 92.17 L248.27 94.30 L248.90 96.49 L249.53 98.75 L250.16 101.06 L250.79 103.44 L251.42 105.87 L252.05 108.36 L252.68 110.91 L253.31 113.51 L253.94 116.17 L254.57 118.88 L255.20 121.64 L255.83 124.45 L256.46 127.31 L257.09 130.22 L257.72 133.18 L258.35 136.19 L258.98 139.24 L259.61 142.33 L260.24 145.47 L260.87 148.65 L261.50 151.87 L262.13 155.13 L262.76 158.42 L263.39 161.76 L264.02 165.12 L264.65 168.53 L265.28 171.96 L265.91 175.42 L266.54 178.92 L267.17 182.44 L267.80 185.99 L268.43 189.56 L269.06 193.16 L269.69 196.78 L270.32 200.42 L270.95 204.08 L271.58 207.76 L272.21 211.46 L272.84 215.17 L273.47 218.89 L274.10 222.63 L274.73 226.38 L275.36 230.13 L275.99 233.90 L276.62 237.67 L277.25 241.44 L277.88 245.22 L278.51 249.00 L279.14 252.78 L279.77 256.56 L280.40 260.33 L281.03 264.10 L281.66 267.87 L282.29 271.63 L282.92 275.38 L283.55 279.11 L284.18 282.84 L284.81 286.55 L285.44 290.25 L286.07 293.93 L286.70 297.60 L287.33 301.24 L287.96 304.87 L288.59 308.47 L289.22 312.05 L289.85 315.60 L290.48 319.12 L291.11 322.62 L291.74 326.09 L292.37 329.53 L293.00 332.94 L293.63 336.31 L294.26 339.65 L294.89 342.95 L295.52 346.21 L296.15 349.44 L296.78 352.62 L297.41 355.77 L298.04 358.87 L298.67 361.93 L299.30 364.94 L299.93 367.91 L300.56 370.83 L301.19 373.70 L301.82 376.52 L302.45 379.29 L303.08 382.01 L303.71 384.67 L304.34 387.28 L304.97 389.84 L305.60 392.34 L306.23 394.78 L306.86 397.16 L307.49 399.49 L308.12 401.75 L308.75 403.95 L309.38 406.10 L310.01 408.18 L310.64 410.19 L311.27 412.14 L311.90 414.03 L312.53 415.85 L313.16 417.60 L313.79 419.29 L314.42 420.91 L315.05 422.46 L315.68 423.94 L316.31 425.35 L316.94 426.69 L317.57 427.96 L318.20 429.15 L318.83 430.28 L319.46 431.33 L320.09 432.31 L320.72 433.22 L321.35 434.05 L321.98 434.81 L322.61 435.50 L323.24 436.11 L323.87 436.65 L324.50 437.11 L325.13 437.49 L325.76 437.81 L326.39 438.04 L327.02 438.20 L327.65 438.29 L328.28 438.29 L328.91 438.23 L329.54 438.09 L330.17 437.87 L330.80 437.58 L331.43 437.21 L332.06 436.76 L332.69 436.24 L333.32 435.65 L333.95 434.98 L334.58 434.24 L335.21 433.43 L335.84 432.54 L336.47 431.57 L337.10 430.54 L337.73 429.43 L338.36 428.25 L338.99 427.00 L339.62 425.67 L340.25 424.28 L340.88 422.82 L341.51 421.28 L342.14 419.68 L342.77 418.01 L343.40 416.27 L344.03 414.47 L344.66 412.60 L345.29 410.66 L345.92 408.66 L346.55 406.60 L347.18 404.47 L347.81 402.28 L348.44 400.03 L349.07 397.72 L349.70 395.35 L350.33 392.92 L350.96 390.44 L351.59 387.90 L352.22 385.30 L352.85 382.65 L353.48 379.94 L354.11 377.18 L354.74 374.38 L355.37 371.52 L356.00 368.61 L356.63 365.65 L357.26 362.65 L357.89 359.61 L358.52 356.51 L359.15 353.38 L359.78 350.20 L360.41 346.99 L361.04 343.73 L361.67 340.44 L362.30 337.11 L362.93 333.75 L363.56 330.35 L364.19 326.92 L364.82 323.45 L365.45 319.96 L366.08 316.44 L366.71 312.90 L367.34 309.32 L367.97 305.73 L368.60 302.11" fill="none" stroke="#0e0e33" stroke-width="1.75" stroke-linejoin="round"/></g></svg><svg style="position:absolute;left:711.5px;top:75.4px;" width="14" height="12" viewBox="0 0 14 12"><g transform="translate(7,6)"><path d="M-3.8 2 L0 -2 L3.8 2" transform="translate(0,1)" stroke="#fff" stroke-opacity="0.5" stroke-width="1.8" fill="none" stroke-linecap="round" stroke-linejoin="round"/><path d="M-3.8 2 L0 -2 L3.8 2" stroke="#1d1a19" stroke-width="1.8" fill="none" stroke-linecap="round" stroke-linejoin="round"/></g></svg><div class="sbg" style="left:712.3px;top:89px;width:12.5px;height:456px"></div><div class="sbv" style="left:714px;top:118.3px;width:9.3px;height:389.3px"></div><svg style="position:absolute;left:711.7px;top:546.1px;" width="14" height="12" viewBox="0 0 14 12"><g transform="translate(7,6)"><path d="M-3.8 2 L0 -2 L3.8 2" transform="translate(0,1)" stroke="#fff" stroke-opacity="0.5" stroke-width="1.8" fill="none" stroke-linecap="round" stroke-linejoin="round"/><path d="M-3.8 2 L0 -2 L3.8 2" stroke="#1d1a19" stroke-width="1.8" fill="none" stroke-linecap="round" stroke-linejoin="round"/></g></svg><svg style="position:absolute;left:711.7px;top:559.5px;" width="14" height="12" viewBox="0 0 14 12"><g transform="translate(7,6)"><path d="M-3.8 -2 L0 2 L3.8 -2" transform="translate(0,1)" stroke="#fff" stroke-opacity="0.5" stroke-width="1.8" fill="none" stroke-linecap="round" stroke-linejoin="round"/><path d="M-3.8 -2 L0 2 L3.8 -2" stroke="#1d1a19" stroke-width="1.8" fill="none" stroke-linecap="round" stroke-linejoin="round"/></g></svg><svg style="position:absolute;left:350.5px;top:576.4px;" width="12" height="14" viewBox="0 0 12 14"><g transform="translate(6,7)"><path d="M2.1 -3.7 L-2.1 0 L2.1 3.7" transform="translate(0,1)" stroke="#fff" stroke-opacity="0.5" stroke-width="1.8" fill="none" stroke-linecap="round" stroke-linejoin="round"/><path d="M2.1 -3.7 L-2.1 0 L2.1 3.7" stroke="#1d1a19" stroke-width="1.8" fill="none" stroke-linecap="round" stroke-linejoin="round"/></g></svg><div class="sbg" style="left:364px;top:576.3px;width:315.7px;height:13.2px"></div><div class="sbh" style="left:424.7px;top:578px;width:190.3px;height:10.3px"></div><svg style="position:absolute;left:680.3px;top:576.2px;" width="12" height="14" viewBox="0 0 12 14"><g transform="translate(6,7)"><path d="M2.1 -3.7 L-2.1 0 L2.1 3.7" transform="translate(0,1)" stroke="#fff" stroke-opacity="0.5" stroke-width="1.8" fill="none" stroke-linecap="round" stroke-linejoin="round"/><path d="M2.1 -3.7 L-2.1 0 L2.1 3.7" stroke="#1d1a19" stroke-width="1.8" fill="none" stroke-linecap="round" stroke-linejoin="round"/></g></svg><svg style="position:absolute;left:694.2px;top:576.2px;" width="12" height="14" viewBox="0 0 12 14"><g transform="translate(6,7)"><path d="M-2.1 -3.7 L2.1 0 L-2.1 3.7" transform="translate(0,1)" stroke="#fff" stroke-opacity="0.5" stroke-width="1.8" fill="none" stroke-linecap="round" stroke-linejoin="round"/><path d="M-2.1 -3.7 L2.1 0 L-2.1 3.7" stroke="#1d1a19" stroke-width="1.8" fill="none" stroke-linecap="round" stroke-linejoin="round"/></g></svg><svg style="position:absolute;left:346.0px;top:202.79999999999998px;" width="4" height="10" viewBox="0 0 4 10"><rect x="1.6" y="1.6" width="1.5" height="1.5" fill="#fff" opacity="0.85"/><rect x="0.6" y="0.6" width="1.5" height="1.5" fill="#6a6663"/><rect x="1.6" y="4.7" width="1.5" height="1.5" fill="#fff" opacity="0.85"/><rect x="0.6" y="3.7" width="1.5" height="1.5" fill="#6a6663"/><rect x="1.6" y="7.8" width="1.5" height="1.5" fill="#fff" opacity="0.85"/><rect x="0.6" y="6.8" width="1.5" height="1.5" fill="#6a6663"/></svg><svg style="position:absolute;left:346.0px;top:452.8px;" width="4" height="10" viewBox="0 0 4 10"><rect x="1.6" y="1.6" width="1.5" height="1.5" fill="#fff" opacity="0.85"/><rect x="0.6" y="0.6" width="1.5" height="1.5" fill="#6a6663"/><rect x="1.6" y="4.7" width="1.5" height="1.5" fill="#fff" opacity="0.85"/><rect x="0.6" y="3.7" width="1.5" height="1.5" fill="#6a6663"/><rect x="1.6" y="7.8" width="1.5" height="1.5" fill="#fff" opacity="0.85"/><rect x="0.6" y="6.8" width="1.5" height="1.5" fill="#6a6663"/></svg><svg style="position:absolute;left:727.0px;top:202.79999999999998px;" width="4" height="10" viewBox="0 0 4 10"><rect x="1.6" y="1.6" width="1.5" height="1.5" fill="#fff" opacity="0.85"/><rect x="0.6" y="0.6" width="1.5" height="1.5" fill="#6a6663"/><rect x="1.6" y="4.7" width="1.5" height="1.5" fill="#fff" opacity="0.85"/><rect x="0.6" y="3.7" width="1.5" height="1.5" fill="#6a6663"/><rect x="1.6" y="7.8" width="1.5" height="1.5" fill="#fff" opacity="0.85"/><rect x="0.6" y="6.8" width="1.5" height="1.5" fill="#6a6663"/></svg><svg style="position:absolute;left:727.0px;top:452.8px;" width="4" height="10" viewBox="0 0 4 10"><rect x="1.6" y="1.6" width="1.5" height="1.5" fill="#fff" opacity="0.85"/><rect x="0.6" y="0.6" width="1.5" height="1.5" fill="#6a6663"/><rect x="1.6" y="4.7" width="1.5" height="1.5" fill="#fff" opacity="0.85"/><rect x="0.6" y="3.7" width="1.5" height="1.5" fill="#6a6663"/><rect x="1.6" y="7.8" width="1.5" height="1.5" fill="#fff" opacity="0.85"/><rect x="0.6" y="6.8" width="1.5" height="1.5" fill="#6a6663"/></svg><div class="dockl" style="left:732px;top:74px;width:623px;height:517.5px"></div><div class="dockd" style="left:731px;top:73px;width:623px;height:517.5px"></div><div class="t" id="t37" style="left:737.00px;top:77.00px;font-size:13px;color:#1f1c1b;letter-spacing:-0.337px;">Властивості кривої у координатах <u>xy</u>, заданої рівнянням</div><div style="position:absolute;left:1315.5px;top:77.0px;width:11px;height:11px;border-radius:50%;background:radial-gradient(rgba(255,255,255,0.55),rgba(255,255,255,0.25) 60%,rgba(255,255,255,0))"></div><div style="position:absolute;left:1334.5px;top:77.0px;width:11px;height:11px;border-radius:50%;background:radial-gradient(rgba(255,255,255,0.55),rgba(255,255,255,0.25) 60%,rgba(255,255,255,0))"></div><svg style="position:absolute;left:1316px;top:77.5px;" width="10" height="10" viewBox="0 0 10 10"><path d="M5 1.7 L8.3 5 L5 8.3 L1.7 5Z" fill="none" stroke="#1d1a19" stroke-width="1.35"/></svg><svg style="position:absolute;left:1335px;top:77.5px;" width="10" height="10" viewBox="0 0 10 10"><path d="M2.2 2.2 L7.8 7.8 M7.8 2.2 L2.2 7.8" fill="none" stroke="#1d1a19" stroke-width="1.3" stroke-linecap="round"/></svg><div style="position:absolute;left:813px;top:102px;width:44.299999999999955px;height:19.5px;box-sizing:border-box;border:1px solid rgba(255,255,255,0.92);border-bottom:none;border-radius:4px 4px 0 0;background:linear-gradient(#d8d5d2,#cac6c3 60%,#bfbab6);box-shadow:-1px 0 0 rgba(0,0,0,0.17),1px 0 0 rgba(0,0,0,0.17),0 -1px 0 rgba(0,0,0,0.06)"></div><div class="t" id="t38" style="left:819.80px;top:105.00px;font-size:13px;color:#1f1c1b;letter-spacing:-0.680px;">Лінія</div><div style="position:absolute;left:861px;top:102px;width:92.29999999999995px;height:19.5px;box-sizing:border-box;border:1px solid rgba(255,255,255,0.92);border-bottom:none;border-radius:4px 4px 0 0;background:linear-gradient(#d8d5d2,#cac6c3 60%,#bfbab6);box-shadow:-1px 0 0 rgba(0,0,0,0.17),1px 0 0 rgba(0,0,0,0.17),0 -1px 0 rgba(0,0,0,0.06)"></div><div class="t" id="t39" style="left:867.60px;top:105.00px;font-size:13px;color:#1f1c1b;letter-spacing:-0.302px;">Позначення</div><div style="position:absolute;left:957px;top:102px;width:76.5px;height:19.5px;box-sizing:border-box;border:1px solid rgba(255,255,255,0.92);border-bottom:none;border-radius:4px 4px 0 0;background:linear-gradient(#d8d5d2,#cac6c3 60%,#bfbab6);box-shadow:-1px 0 0 rgba(0,0,0,0.17),1px 0 0 rgba(0,0,0,0.17),0 -1px 0 rgba(0,0,0,0.06)"></div><div class="t" id="t40" style="left:963.70px;top:105.00px;font-size:13px;color:#1f1c1b;letter-spacing:-0.344px;">Значення</div><div style="position:absolute;left:1037px;top:102px;width:134.5px;height:19.5px;box-sizing:border-box;border:1px solid rgba(255,255,255,0.92);border-bottom:none;border-radius:4px 4px 0 0;background:linear-gradient(#d8d5d2,#cac6c3 60%,#bfbab6);box-shadow:-1px 0 0 rgba(0,0,0,0.17),1px 0 0 rgba(0,0,0,0.17),0 -1px 0 rgba(0,0,0,0.06)"></div><div class="t" id="t41" style="left:1043.80px;top:105.00px;font-size:13px;color:#1f1c1b;letter-spacing:-0.416px;">Позначки похибок</div><div style="position:absolute;left:739px;top:121px;width:608px;height:428px;box-sizing:border-box;border:1px solid rgba(255,255,255,0.85);border-top:none;border-radius:0 4px 4px 4px;box-shadow:1px 1px 0 rgba(0,0,0,0.12),-1px 0 0 rgba(0,0,0,0.10)"></div><div style="position:absolute;left:809px;top:121px;width:537px;height:1px;background:rgba(255,255,255,0.9)"></div><div style="position:absolute;left:810px;top:120px;width:536px;height:1px;background:rgba(0,0,0,0.08)"></div><div style="position:absolute;left:739px;top:100px;width:70.5px;height:22px;box-sizing:border-box;border:1px solid rgba(255,255,255,0.95);border-bottom:none;border-radius:4px 4px 0 0;background:linear-gradient(rgba(255,255,255,0.5),rgba(255,255,255,0.12) 60%,rgba(255,255,255,0));box-shadow:-1px 0 0 rgba(0,0,0,0.12),1px 0 0 rgba(0,0,0,0.2),0 -1px 0 rgba(0,0,0,0.08)"></div><div class="t" id="t42" style="left:746.20px;top:105.00px;font-size:13px;color:#1f1c1b;letter-spacing:-0.398px;">Загальні</div><div class="t" id="t43" style="left:742.80px;top:129.00px;font-size:13px;color:#1f1c1b;letter-spacing:-0.324px;">Назва</div><div class="edit" style="left:874px;top:127px;width:467px;height:17.5px"></div><div class="t" id="t44" style="left:878.40px;top:129.00px;font-size:13px;color:#1f1c1b;letter-spacing:-0.538px;">f(x)</div><div class="t" id="t45" style="left:742.80px;top:154.00px;font-size:13px;color:#1f1c1b;letter-spacing:-0.055px;">Коментар</div><div class="edit" style="left:874px;top:152px;width:467px;height:17.5px"></div><div style="position:absolute;left:745px;top:184px;width:596px;height:1px;background:linear-gradient(90deg,rgba(0,0,0,0),rgba(0,0,0,0.22) 8%,rgba(0,0,0,0.22) 92%,rgba(0,0,0,0))"></div><div style="position:absolute;left:745px;top:185px;width:596px;height:1px;background:linear-gradient(90deg,rgba(255,255,255,0),rgba(255,255,255,0.7) 8%,rgba(255,255,255,0.7) 92%,rgba(255,255,255,0))"></div><div class="t" id="t46" style="left:742.80px;top:193.00px;font-size:13px;color:#1f1c1b;letter-spacing:-0.609px;">Тип рівняння</div><div class="btn" style="left:873px;top:190px;width:468px;height:18.5px"></div><div class="t" id="t47" style="left:877.10px;top:192.00px;font-size:13px;color:#1f1c1b;letter-spacing:-0.147px;">у декартовій системі</div><svg style="position:absolute;left:1324px;top:193px;" width="14" height="12" viewBox="0 0 14 12"><path d="M3 4 L7 8.2 L11 4" fill="none" stroke="#1f1c1b" stroke-width="1.6" stroke-linecap="round" stroke-linejoin="round"/></svg><div class="t" id="t48" style="left:742.80px;top:232.00px;font-size:13px;color:#1f1c1b;letter-spacing:-0.943px;">y=f(x)</div><div style="position:absolute;left:871.5px;top:214px;width:446px;height:50px;background:#fff"></div><div class="edit" style="left:874px;top:216.5px;width:441px;height:45px"></div><div class="t" id="t49" style="left:878.70px;top:222.00px;font-size:12px;color:#3a3a3a;"><b style="color:#3c1a12">sin</b>(x)</div><div class="btn" style="left:1319px;top:216px;width:22.5px;height:19px"></div><div class="btn" style="left:1319px;top:241px;width:22.5px;height:19px"></div><div class="t" id="t50" style="left:1321.40px;top:215.00px;font-size:19.5px;color:#7a2a10;font-weight:bold;font-family:Liberation Serif,DejaVu Serif,serif;">T</div><div class="t" id="t51" style="left:1324.40px;top:217.00px;font-size:19.5px;color:#0a0a0a;font-weight:bold;font-family:Liberation Serif,DejaVu Serif,serif;">T</div><div class="t" id="t52" style="left:1323.00px;top:233.00px;font-size:30px;color:#1a1a1a;font-weight:bold;font-family:Liberation Serif,DejaVu Serif,serif;font-style:italic;transform:skewX(7deg) scaleX(0.88);transform-origin:0 100%;">π</div><div class="t" id="t53" style="left:742.80px;top:286.00px;font-size:13px;color:#1f1c1b;letter-spacing:-0.686px;">x, мін.</div><div style="position:absolute;left:871.5px;top:281px;width:257px;height:24px;background:#fff"></div><div class="edit" style="left:874px;top:283px;width:252px;height:20px"></div><div class="t" id="t54" style="left:879.00px;top:288.00px;font-size:13px;color:#1f1c1b;letter-spacing:-0.864px;">-6</div><div class="t" id="t55" style="left:742.80px;top:312.00px;font-size:13px;color:#1f1c1b;letter-spacing:-0.566px;">x, макс.</div><div style="position:absolute;left:871.5px;top:306.7px;width:257px;height:24.2px;background:#fff"></div><div class="edit" style="left:874px;top:309px;width:252px;height:20px"></div><div class="t" id="t56" style="left:879.20px;top:314.00px;font-size:13px;color:#1f1c1b;">6</div><div class="t" id="t57" style="left:742.80px;top:350.00px;font-size:13px;color:#1f1c1b;letter-spacing:-0.208px;">Кількість точок</div><div class="edit" style="left:874px;top:348.5px;width:252px;height:17px"></div><div class="t" id="t58" style="left:878.50px;top:350.00px;font-size:13px;color:#1f1c1b;letter-spacing:-0.307px;">100</div><svg style="position:absolute;left:1110.6px;top:349px;" width="12" height="16" viewBox="0 0 12 16"><path d="M2.6 5.9 L6 2.7 L9.4 5.9 M2.6 10.1 L6 13.3 L9.4 10.1" fill="none" stroke="#1a1716" stroke-width="1.7" stroke-linecap="round" stroke-linejoin="round"/></svg><div style="position:absolute;left:745px;top:370px;width:596px;height:1px;background:linear-gradient(90deg,rgba(0,0,0,0),rgba(0,0,0,0.22) 8%,rgba(0,0,0,0.22) 92%,rgba(0,0,0,0))"></div><div style="position:absolute;left:745px;top:371px;width:596px;height:1px;background:linear-gradient(90deg,rgba(255,255,255,0),rgba(255,255,255,0.7) 8%,rgba(255,255,255,0.7) 92%,rgba(255,255,255,0))"></div><div class="btn" style="left:1131.5px;top:377px;width:210px;height:19.5px;background:linear-gradient(#d6d3d0,#c7c3c0);border-color:rgba(70,60,55,0.22);box-shadow:0 1px 1.5px rgba(0,0,0,0.32), inset 0 1px 0 rgba(255,255,255,0.6)"></div><div class="t" id="t59" style="left:1195.40px;top:380.00px;font-size:13px;color:#9a9794;letter-spacing:-0.180px;">Переобчислити</div><svg style="position:absolute;left:1173px;top:378px;" width="18" height="18" viewBox="0 0 18 18"><g transform="translate(8.8,8.9)" fill="#dedbd9"><rect x="-1.5" y="-7.7" width="3" height="3.4" rx="0.6" transform="rotate(0)"/><rect x="-1.5" y="-7.7" width="3" height="3.4" rx="0.6" transform="rotate(45)"/><rect x="-1.5" y="-7.7" width="3" height="3.4" rx="0.6" transform="rotate(90)"/><rect x="-1.5" y="-7.7" width="3" height="3.4" rx="0.6" transform="rotate(135)"/><rect x="-1.5" y="-7.7" width="3" height="3.4" rx="0.6" transform="rotate(180)"/><rect x="-1.5" y="-7.7" width="3" height="3.4" rx="0.6" transform="rotate(225)"/><rect x="-1.5" y="-7.7" width="3" height="3.4" rx="0.6" transform="rotate(270)"/><rect x="-1.5" y="-7.7" width="3" height="3.4" rx="0.6" transform="rotate(315)"/><circle r="5.6"/></g><g transform="translate(8.8,8.9)"><circle r="3.6" fill="#d2cfcc"/><circle r="2.5" fill="#a9a5a2"/></g></svg><div style="position:absolute;left:745.2px;top:525px;width:16.8px;height:17px;box-sizing:border-box;border:1.5px solid #4a97e0;border-radius:4.5px;background:linear-gradient(#e4e1df,#d3cfcc);box-shadow:0 0 1.5px #6fb2ea"></div><svg style="position:absolute;left:745.5px;top:525px;" width="17" height="17" viewBox="0 0 17 17"><path d="M3.6 9.2 L7.2 13 L13.2 4.9" fill="none" stroke="#1a1817" stroke-width="1.9" stroke-linecap="round" stroke-linejoin="round"/></svg><div class="t" id="t60" style="left:767.30px;top:527.00px;font-size:13px;color:#1f1c1b;letter-spacing:-0.373px;">видиме</div><div class="btn" style="left:1206.7px;top:557.8px;width:22.5px;height:19.4px;border-radius:5px;background:linear-gradient(#dedbd9,#cbc7c4);border-color:rgba(255,255,255,0.35);box-shadow:0 1px 1.5px rgba(0,0,0,0.4),0 0 0 0.5px rgba(0,0,0,0.12), inset 0 1px 0 rgba(255,255,255,0.5)"></div><div class="btn" style="left:1232.7px;top:557.8px;width:22.5px;height:19.4px;border-radius:5px;background:linear-gradient(#dedbd9,#cbc7c4);border-color:rgba(255,255,255,0.35);box-shadow:0 1px 1.5px rgba(0,0,0,0.4),0 0 0 0.5px rgba(0,0,0,0.12), inset 0 1px 0 rgba(255,255,255,0.5)"></div><div class="btn" style="left:1258.7px;top:557.8px;width:22.5px;height:19.4px;border-radius:5px;background:linear-gradient(#dedbd9,#cbc7c4);border-color:rgba(255,255,255,0.35);box-shadow:0 1px 1.5px rgba(0,0,0,0.4),0 0 0 0.5px rgba(0,0,0,0.12), inset 0 1px 0 rgba(255,255,255,0.5)"></div><div class="btn" style="left:1294.7px;top:557.8px;width:22.5px;height:19.4px;border-radius:5px;background:linear-gradient(#dedbd9,#cbc7c4);border-color:rgba(255,255,255,0.35);box-shadow:0 1px 1.5px rgba(0,0,0,0.4),0 0 0 0.5px rgba(0,0,0,0.12), inset 0 1px 0 rgba(255,255,255,0.5)"></div><div class="btn" style="left:1320.7px;top:557.8px;width:22.5px;height:19.4px;border-radius:5px;background:linear-gradient(#dedbd9,#cbc7c4);border-color:rgba(255,255,255,0.35);box-shadow:0 1px 1.5px rgba(0,0,0,0.4),0 0 0 0.5px rgba(0,0,0,0.12), inset 0 1px 0 rgba(255,255,255,0.5)"></div><svg style="position:absolute;left:1210px;top:559.5px;" width="16" height="16" viewBox="0 0 16 16"><path d="M2 0.8 H9.5 L13.8 5 V10 H2Z" fill="#e6e4e2" stroke="#a8a4a1" stroke-width="0.7"/><path d="M9.5 0.8 L13.8 5 H10.3 Q9.5 5 9.5 4.2Z" fill="#c9c6c3"/><path d="M12 3.5 H15.3 V9 H12Z" fill="#aeaaa7" opacity="0.7"/><path d="M0.8 9 H15.2 V14.6 Q15.2 15.3 14.5 15.3 H1.5 Q0.8 15.3 0.8 14.6Z" fill="#b9b5b2" stroke="#a5a19e" stroke-width="0.6"/><path d="M1.2 13.2 H14.8" stroke="#a5a19e" stroke-width="0.7"/></svg><svg style="position:absolute;left:1236px;top:560px;" width="16" height="16" viewBox="0 0 16 16"><path d="M1 1.6 Q1 1 1.6 1 H14.4 Q15 1 15 1.6 V14.4 Q15 15 14.4 15 H2.6 L1 13.4Z" fill="#3a3a3d" stroke="#232325" stroke-width="0.7"/><rect x="3" y="1.5" width="10" height="6.8" fill="#f2f5f7"/><path d="M4 3.2 H12 M4 5.2 H12 M4 7 H12" stroke="#8cbdd3" stroke-width="0.8"/><rect x="3.8" y="10.2" width="8.6" height="4.6" fill="#cfcfcf"/><rect x="4.8" y="11" width="2.2" height="3.4" fill="#2c2c2e"/></svg><svg style="position:absolute;left:1262px;top:560px;" width="16" height="16" viewBox="0 0 16 16"><path d="M1 1.6 Q1 1 1.6 1 H14.4 Q15 1 15 1.6 V14.4 Q15 15 14.4 15 H2.6 L1 13.4Z" fill="#3a3a3d" stroke="#232325" stroke-width="0.7"/><rect x="3" y="1.5" width="10" height="6.8" fill="#f2f5f7"/><path d="M4 3.2 H12 M4 5.2 H12 M4 7 H12" stroke="#8cbdd3" stroke-width="0.8"/><rect x="3.8" y="10.2" width="8.6" height="4.6" fill="#cfcfcf"/><rect x="4.8" y="11" width="2.2" height="3.4" fill="#2c2c2e"/><path d="M1.2 15 L3 10.5 L12.8 0.8 L15.3 3.2 L5.6 13 Z" fill="#e7a92a" stroke="#4a3510" stroke-width="0.6"/><path d="M3.6 11.2 L13.4 1.4 M4.8 12.4 L14.6 2.6" stroke="#1d1a12" stroke-width="0.9"/><path d="M1.2 15 L2 12.8 L3.4 14.2Z" fill="#222"/><path d="M12.8 0.8 L15.3 3.2 L14.4 4.1 L11.9 1.7Z" fill="#c0392b"/></svg><svg style="position:absolute;left:1298px;top:559.5px;" width="16" height="16" viewBox="0 0 16 16"><path d="M1 1 H10 V11 H1Z" fill="#dcd9d7" stroke="#a29e9b" stroke-width="0.7"/><path d="M5 4.4 H15 V12 L12 15.2 H5Z" fill="#e8e6e4" stroke="#a29e9b" stroke-width="0.7"/><path d="M15 12 H12.6 Q12 12 12 12.6 V15.2Z" fill="#c4c1be"/></svg><svg style="position:absolute;left:1324px;top:559.5px;" width="16" height="16" viewBox="0 0 16 16"><path d="M1.5 2.5 H11.5 V14.5 H1.5Z" fill="#d0cdca" stroke="#a9a5a2" stroke-width="0.7"/><path d="M4 0.8 H9 V3.2 H4Z" fill="#e2e0de" stroke="#b3afac" stroke-width="0.5"/><path d="M2.8 3.8 H10.2 V13.4 H2.8Z" fill="#e4e2e0"/><path d="M7 6 H15 V12.4 L12.4 15.2 H7Z" fill="#eceae8" stroke="#a29e9b" stroke-width="0.7"/><path d="M15 12.4 H13 Q12.4 12.4 12.4 13 V15.2Z" fill="#c4c1be"/></svg>
</body></html>
